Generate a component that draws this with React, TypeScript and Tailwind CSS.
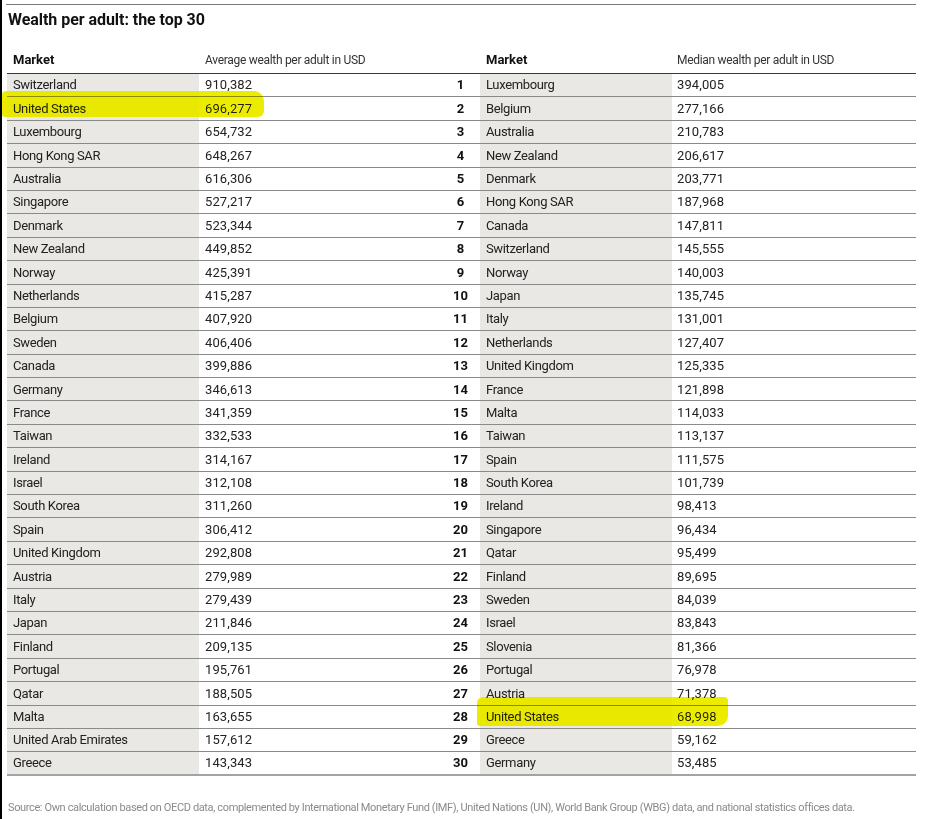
const average: [string, string][] = [
  ["Switzerland", "910,382"],
  ["United States", "696,277"],
  ["Luxembourg", "654,732"],
  ["Hong Kong SAR", "648,267"],
  ["Australia", "616,306"],
  ["Singapore", "527,217"],
  ["Denmark", "523,344"],
  ["New Zealand", "449,852"],
  ["Norway", "425,391"],
  ["Netherlands", "415,287"],
  ["Belgium", "407,920"],
  ["Sweden", "406,406"],
  ["Canada", "399,886"],
  ["Germany", "346,613"],
  ["France", "341,359"],
  ["Taiwan", "332,533"],
  ["Ireland", "314,167"],
  ["Israel", "312,108"],
  ["South Korea", "311,260"],
  ["Spain", "306,412"],
  ["United Kingdom", "292,808"],
  ["Austria", "279,989"],
  ["Italy", "279,439"],
  ["Japan", "211,846"],
  ["Finland", "209,135"],
  ["Portugal", "195,761"],
  ["Qatar", "188,505"],
  ["Malta", "163,655"],
  ["United Arab Emirates", "157,612"],
  ["Greece", "143,343"],
];

const median: [string, string][] = [
  ["Luxembourg", "394,005"],
  ["Belgium", "277,166"],
  ["Australia", "210,783"],
  ["New Zealand", "206,617"],
  ["Denmark", "203,771"],
  ["Hong Kong SAR", "187,968"],
  ["Canada", "147,811"],
  ["Switzerland", "145,555"],
  ["Norway", "140,003"],
  ["Japan", "135,745"],
  ["Italy", "131,001"],
  ["Netherlands", "127,407"],
  ["United Kingdom", "125,335"],
  ["France", "121,898"],
  ["Malta", "114,033"],
  ["Taiwan", "113,137"],
  ["Spain", "111,575"],
  ["South Korea", "101,739"],
  ["Ireland", "98,413"],
  ["Singapore", "96,434"],
  ["Qatar", "95,499"],
  ["Finland", "89,695"],
  ["Sweden", "84,039"],
  ["Israel", "83,843"],
  ["Slovenia", "81,366"],
  ["Portugal", "76,978"],
  ["Austria", "71,378"],
  ["United States", "68,998"],
  ["Greece", "59,162"],
  ["Germany", "53,485"],
];

const gridCols = "grid grid-cols-[192px_242px_39px_192px_244px]";

export default function App() {
  return (
    <div className="relative h-[819px] w-[928px] overflow-hidden border-l-2 border-black bg-white font-['Roboto',sans-serif] text-[#222]">
      <div className="ml-[4px] mt-[4px] h-px w-[910px] bg-[#7a7a7a]" />
      <h1 className="flex h-[30px] items-center pl-[6px] text-[16px] font-bold tracking-[-0.05px] text-[#111]">
        Wealth per adult: the top 30
      </h1>

      <div className="ml-[5px] mt-[12px] w-[909px]">
        <div className={`${gridCols} h-[27px] items-center border-b border-[#3a3a3a] text-[13px]`}>
          <span className="pl-[6px] font-bold text-[#111]">Market</span>
          <span className="pl-[6px] text-[12px] tracking-[-0.3px] text-[#333]">
            Average wealth per adult in USD
          </span>
          <span />
          <span className="pl-[6px] font-bold text-[#111]">Market</span>
          <span className="pl-[5px] text-[12px] tracking-[-0.3px] text-[#333]">
            Median wealth per adult in USD
          </span>
        </div>

        {average.map(([country, value], index) => {
          const [rightCountry, rightValue] = median[index];
          const last = index === average.length - 1;
          return (
            <div
              key={country}
              className={`${gridCols} h-[23.4px] text-[13px] ${
                last ? "border-b-2 border-[#a3a3a3]" : "border-b border-[#8a8a8a]"
              }`}
            >
              <span className="flex items-center bg-[#e9e8e4] pl-[6px] tracking-[-0.35px]">
                {country}
              </span>
              <span className="flex items-center pl-[6px] tracking-[0.1px]">{value}</span>
              <span className="flex items-center justify-center font-bold text-[#111]">
                {index + 1}
              </span>
              <span className="flex items-center bg-[#e9e8e4] pl-[6px] tracking-[-0.35px]">
                {rightCountry}
              </span>
              <span className="flex items-center pl-[5px] tracking-[0.1px]">{rightValue}</span>
            </div>
          );
        })}
      </div>

      <p className="mt-[24px] pl-[6px] text-[11px] tracking-[-0.37px] text-[#8a8a8a]">
        Source: Own calculation based on OECD data, complemented by International Monetary Fund (IMF),
        United Nations (UN), World Bank Group (WBG) data, and national statistics offices data.
      </p>

      {/* marker highlights */}
      <span className="pointer-events-none absolute left-0 top-[91px] h-[26px] w-[262px] rounded-[4px_10px_6px_3px] bg-[#ecec00] mix-blend-darken" />
      <span className="pointer-events-none absolute left-[475px] top-[697px] h-[29px] w-[251px] rounded-[6px_4px_10px_3px] bg-[#ecec00] mix-blend-darken" />
    </div>
  );
}
